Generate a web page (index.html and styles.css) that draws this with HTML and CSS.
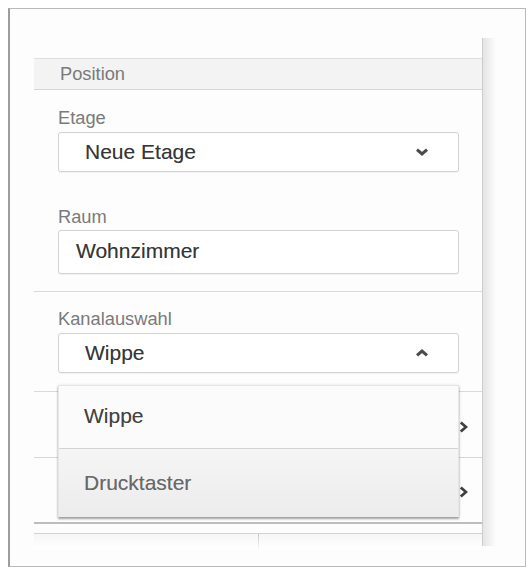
FILE: index.html
```html
<!DOCTYPE html>
<html lang="de">
<head>
<meta charset="utf-8">
<title>Position</title>
<link rel="stylesheet" href="styles.css">
</head>
<body>
<div class="frame">
  <div class="panel">
    <div class="section-head">Position</div>
    <div class="section">
      <div class="field">
        <div class="label">Etage</div>
        <div class="select">
          <span class="value">Neue Etage</span>
          <svg class="caret" width="14" height="8" viewBox="0 0 14 8"><path d="M2 1.6 L7 6 L12 1.6" /></svg>
        </div>
      </div>
      <div class="field field-gap">
        <div class="label label-tight">Raum</div>
        <div class="input"><span class="value">Wohnzimmer</span></div>
      </div>
    </div>
    <div class="section section-last">
      <div class="field">
        <div class="label">Kanalauswahl</div>
        <div class="select-wrap">
          <div class="select">
            <span class="value">Wippe</span>
            <svg class="caret" width="14" height="8" viewBox="0 0 14 8"><path d="M2 6.4 L7 2 L12 6.4" /></svg>
          </div>
          <div class="menu">
            <div class="menu-item">Wippe</div>
            <div class="menu-item menu-item-active">Drucktaster</div>
          </div>
        </div>
      </div>
    </div>
    <div class="row">
      <svg class="arrow" width="9" height="12" viewBox="0 0 9 12"><path d="M1.8 1.5 L7 6 L1.8 10.5" /></svg>
    </div>
    <div class="row row-last">
      <svg class="arrow" width="9" height="12" viewBox="0 0 9 12"><path d="M1.8 1.5 L7 6 L1.8 10.5" /></svg>
    </div>
    <div class="footer">
      <div class="tab"></div>
      <div class="tab"></div>
    </div>
  </div>
  <div class="rail"></div>
</div>
</body>
</html>
```

FILE: styles.css
```css
* { box-sizing: border-box; }

html, body {
  margin: 0;
  background: #ffffff;
  font-family: "Liberation Sans", Arial, sans-serif;
}

.frame {
  margin: 8px 0 0 8px;
  width: 518px;
  height: 559px;
  border: 1px solid #b9b9b9;
  border-left: 2px solid #9d9d9d;
  background: #fdfdfd;
  padding: 29px 0 0 24px;
  display: flex;
  align-items: flex-start;
}

.panel {
  width: 448px;
  padding-top: 20px;
}

.rail {
  width: 13px;
  height: 508px;
  border-left: 1px solid #cdcdcd;
  background: linear-gradient(to right, #e4e4e4, #f4f4f4 70%, #fbfbfb);
}

.section-head {
  height: 32px;
  border-top: 1px solid #dedede;
  border-bottom: 1px solid #d6d6d6;
  background: #f3f3f3;
  padding-left: 26px;
  font-size: 18.3px;
  line-height: 30px;
  color: #7a7a7a;
}

.section {
  padding: 17px 23px 17px 24px;
  border-bottom: 1px solid #d9d9d9;
}

.section-last {
  padding-top: 16px;
  padding-bottom: 18px;
}

.field-gap { margin-top: 34px; }

.label {
  font-size: 18.3px;
  line-height: 22px;
  color: #7a7a7a;
  margin-bottom: 3px;
}

.label-tight { margin-bottom: 2px; }

.select, .input {
  height: 40px;
  border: 1px solid #d2d2d2;
  border-radius: 3px;
  background: #ffffff;
  box-shadow: 0 1px 1px rgba(0, 0, 0, 0.05);
  display: flex;
  align-items: center;
  justify-content: space-between;
  padding: 0 29px 0 26px;
}

.input {
  height: 44px;
  padding: 0 0 3px 17px;
}

.value {
  font-size: 21px;
  color: #363636;
  text-shadow: 0 0 0.6px rgba(0, 0, 0, 0.35);
}

.caret path {
  fill: none;
  stroke: #4a4a4a;
  stroke-width: 3;
}

.select-wrap { position: relative; }

.menu {
  position: absolute;
  top: 52px;
  left: 0;
  right: 0;
  background: #fbfbfb;
  border: 1px solid #e6e6e6;
  border-bottom: none;
  box-shadow: 0 2px 2px rgba(0, 0, 0, 0.35), 0 0 3px rgba(0, 0, 0, 0.1);
  z-index: 2;
}

.menu-item {
  font-size: 21px;
  line-height: 59px;
  padding: 0 0 3px 25px;
  color: #424242;
  text-shadow: 0 0 0.6px rgba(0, 0, 0, 0.3);
  border-bottom: 1px solid #d4d4d4;
}

.menu-item-active {
  padding: 4px 0 5px 25px;
  border-bottom: none;
  color: #686868;
  background: linear-gradient(to bottom, #f5f5f5, #ececec);
}

.row {
  height: 66px;
  border-bottom: 1px solid #d7d7d7;
  display: flex;
  align-items: center;
  justify-content: flex-end;
  padding: 4px 14px 0 0;
}

.row-last {
  border-bottom: 2px solid #bdbdbd;
  margin-bottom: 9px;
}

.arrow path {
  fill: none;
  stroke: #404040;
  stroke-width: 2.8;
}

.footer {
  height: 16px;
  border-top: 1px solid #d2d2d2;
  display: flex;
  background: linear-gradient(to bottom, #f6f6f6, #ffffff);
}

.tab { flex: 1; }

.tab + .tab {
  border-left: 1px solid;
  border-image: linear-gradient(to bottom, #c4c4c4, rgba(255, 255, 255, 0)) 1;
}
```
